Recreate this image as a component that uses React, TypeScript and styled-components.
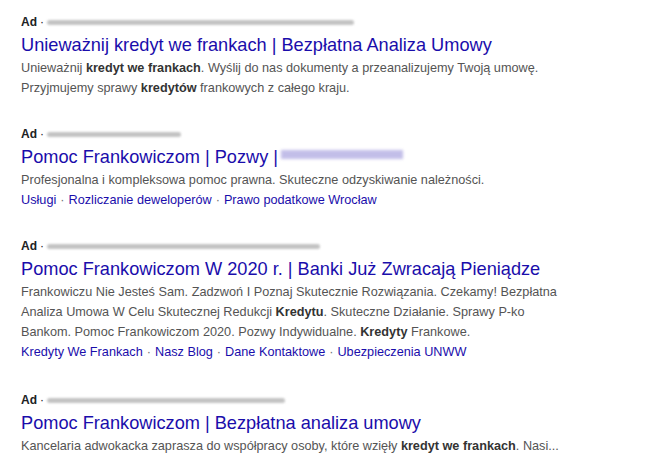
import React from 'react';
import styled, { createGlobalStyle } from 'styled-components';

const GlobalStyle = createGlobalStyle`
  html, body {
    margin: 0;
    padding: 0;
    background: #ffffff;
  }
  body {
    font-family: "Liberation Sans", Arial, sans-serif;
  }
`;

const Page = styled.div`
  width: 645px;
  height: 466px;
  overflow: hidden;
  padding: 12px 0 0 21px;
  box-sizing: border-box;
  display: flex;
  flex-direction: column;
`;

const AdBlock = styled.div<{ $after: number }>`
  display: flex;
  flex-direction: column;
  margin-bottom: ${(p) => p.$after}px;
`;

const AdLine = styled.div`
  display: flex;
  align-items: center;
  height: 20px;
  font-size: 12px;
  color: #202124;
`;

const AdLabel = styled.span`
  font-weight: bold;
`;

const Dot = styled.span`
  margin: 0 3px 0 3px;
`;

const BlurBar = styled.span<{ $w: number }>`
  display: inline-block;
  width: ${(p) => p.$w}px;
  height: 5px;
  margin-top: 1px;
  border-radius: 3px;
  background: #b9b9b9;
  filter: blur(1.3px);
  opacity: 0.85;
`;

const Title = styled.a`
  display: block;
  font-size: 18.2px;
  line-height: 26px;
  color: #1a0dab;
  text-decoration: none;
  white-space: nowrap;
`;

const TitleBlur = styled.span`
  display: inline-block;
  width: 122px;
  height: 9px;
  margin-left: 3px;
  vertical-align: 4px;
  background: #b4aee3;
  filter: blur(1.4px);
  opacity: 0.8;
`;

const Desc = styled.div`
  font-size: 12.7px;
  line-height: 20px;
  color: #545454;
  white-space: nowrap;

  b {
    color: #333333;
  }
`;

const Sitelinks = styled.div`
  font-size: 12.7px;
  line-height: 20px;
  color: #1a0dab;
  white-space: nowrap;
`;

const Sep = styled.span`
  color: #70757a;
  margin: 0 4px;
`;

const SiteLink = styled.a`
  color: #1a0dab;
  text-decoration: none;
`;

interface Ad {
  bar: number;
  after: number;
  title: React.ReactNode;
  desc: React.ReactNode;
  links?: string[];
}

const ads: Ad[] = [
  {
    bar: 307,
    after: 26,
    title: 'Unieważnij kredyt we frankach | Bezpłatna Analiza Umowy',
    desc: (
      <>
        Unieważnij <b>kredyt we frankach</b>. Wyślij do nas dokumenty a przeanalizujemy Twoją umowę.
        <br />
        Przyjmujemy sprawy <b>kredytów</b> frankowych z całego kraju.
      </>
    ),
  },
  {
    bar: 134,
    after: 26,
    title: (
      <>
        Pomoc Frankowiczom | Pozwy |<TitleBlur />
      </>
    ),
    desc: 'Profesjonalna i kompleksowa pomoc prawna. Skuteczne odzyskiwanie należności.',
    links: ['Usługi', 'Rozliczanie deweloperów', 'Prawo podatkowe Wrocław'],
  },
  {
    bar: 273,
    after: 28,
    title: 'Pomoc Frankowiczom W 2020 r. | Banki Już Zwracają Pieniądze',
    desc: (
      <>
        Frankowiczu Nie Jesteś Sam. Zadzwoń I Poznaj Skutecznie Rozwiązania. Czekamy! Bezpłatna
        <br />
        Analiza Umowa W Celu Skutecznej Redukcji <b>Kredytu</b>. Skuteczne Działanie. Sprawy P-ko
        <br />
        Bankom. Pomoc Frankowiczom 2020. Pozwy Indywidualne. <b>Kredyty</b> Frankowe.
      </>
    ),
    links: ['Kredyty We Frankach', 'Nasz Blog', 'Dane Kontaktowe', 'Ubezpieczenia UNWW'],
  },
  {
    bar: 238,
    after: 0,
    title: 'Pomoc Frankowiczom | Bezpłatna analiza umowy',
    desc: (
      <>
        Kancelaria adwokacka zaprasza do współpracy osoby, które wzięły <b>kredyt we frankach</b>. Nasi...
      </>
    ),
  },
];

const App: React.FC = () => {
  return (
    <>
      <GlobalStyle />
      <Page>
        {ads.map((ad, i) => (
          <AdBlock key={i} $after={ad.after}>
            <AdLine>
              <AdLabel>Ad</AdLabel>
              <Dot>·</Dot>
              <BlurBar $w={ad.bar} />
            </AdLine>
            <Title href="#">{ad.title}</Title>
            <Desc>{ad.desc}</Desc>
            {ad.links && (
              <Sitelinks>
                {ad.links.map((l, j) => (
                  <React.Fragment key={l}>
                    {j > 0 && <Sep>·</Sep>}
                    <SiteLink href="#">{l}</SiteLink>
                  </React.Fragment>
                ))}
              </Sitelinks>
            )}
          </AdBlock>
        ))}
      </Page>
    </>
  );
};

export default App;
